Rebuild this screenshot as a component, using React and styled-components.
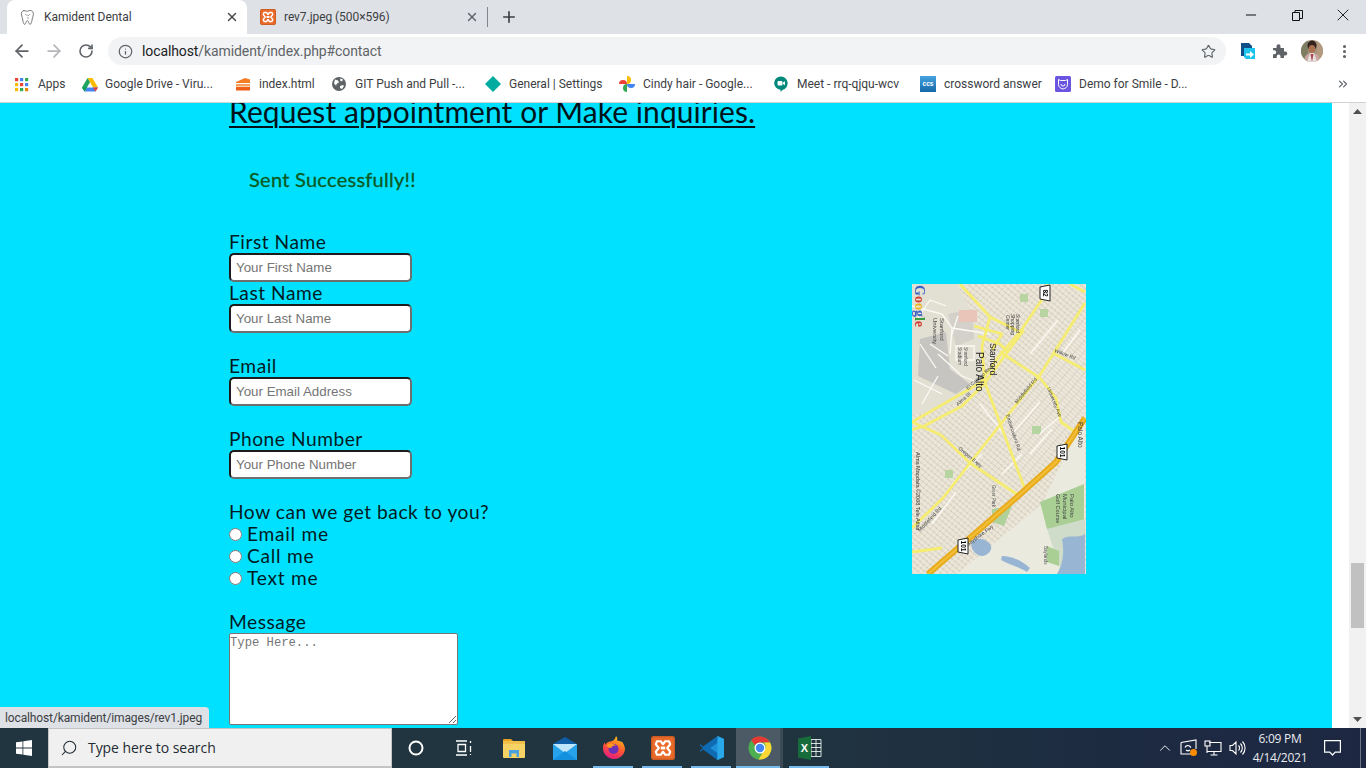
import React from "react";
import styled, { createGlobalStyle } from "styled-components";
import { ArrowLeft, ArrowRight, RotateCw, Info, Star, X, Plus, Minus, EllipsisVertical, ChevronsRight, ChevronUp, Search } from "lucide-react";

const Global = createGlobalStyle`
  html, body { margin: 0; height: 100%; overflow: hidden; background: #fff; }
  #root { height: 100vh; }
  * { box-sizing: border-box; }
`;

const Screen = styled.div`
  position: relative;
  height: 768px;
  width: 1366px;
  display: flex;
  flex-direction: column;
  overflow: hidden;
  font-family: Roboto, "Open Sans", sans-serif;
`;

/* ---------- browser chrome ---------- */
const TabStrip = styled.div`
  height: 34px;
  flex: none;
  background: #dee1e6;
  display: flex;
  align-items: stretch;
  padding-left: 7px;
`;
const Tab = styled.div`
  width: 240px;
  display: flex;
  align-items: center;
  padding: 0 8px 0 13px;
  gap: 8px;
  border-radius: 8px 8px 0 0;
  background: ${p => (p.$active ? "#fff" : "transparent")};
  color: #3c4043;
  font-size: 12px;
  letter-spacing: -0.06px;
`;
const TabTitle = styled.span`
  flex: 1;
  white-space: nowrap;
`;
const TabDivider = styled.div`
  width: 1px;
  height: 20px;
  background: #80868b;
  align-self: center;
`;
const NewTab = styled.div`
  width: 44px;
  padding-right: 2px;
  display: flex;
  align-items: center;
  justify-content: center;
  color: #3c4043;
`;
const WindowControls = styled.div`
  margin-left: auto;
  display: flex;
  color: #111;
`;
const WindowButton = styled.div`
  width: 46px;
  height: 30px;
  display: flex;
  align-items: center;
  justify-content: center;
`;
const Toolbar = styled.div`
  height: 34px;
  flex: none;
  background: #fff;
  display: flex;
  align-items: center;
  padding: 0 0 0 6px;
`;
const NavButton = styled.div`
  width: 32px;
  height: 28px;
  display: flex;
  align-items: center;
  justify-content: center;
  color: ${p => (p.$off ? "#b4b6b9" : "#5f6368")};
`;
const Omnibox = styled.div`
  margin-left: 6px;
  width: 1118px;
  height: 28px;
  border-radius: 14px;
  background: #f1f3f4;
  display: flex;
  align-items: center;
  padding: 0 10px;
  color: #5f6368;
`;
const Url = styled.div`
  margin-left: 9px;
  flex: 1;
  font-size: 14px;
  letter-spacing: -0.1px;
  color: #5f6368;
  b { font-weight: 400; color: #202124; }
`;
const ToolbarIcons = styled.div`
  display: flex;
  align-items: center;
  padding-left: 6px;
`;
const ToolIcon = styled.div`
  width: 32px;
  height: 28px;
  display: flex;
  align-items: center;
  justify-content: center;
  color: #5f6368;
`;
const Bookmarks = styled.div`
  height: 35px;
  flex: none;
  background: #fff;
  border-bottom: 1px solid #d0d2d6;
  display: flex;
  align-items: center;
  padding: 0 0 2px 14px;
`;
const Bookmark = styled.div`
  width: ${p => p.$w}px;
  flex: none;
  display: flex;
  align-items: center;
  gap: ${p => p.$gap || 8}px;
  font-size: 12px;
  color: #3c4043;
  white-space: nowrap;
`;
const MoreBookmarks = styled.div`
  margin-left: auto;
  width: 46px;
  display: flex;
  justify-content: center;
  color: #5f6368;
`;

/* ---------- page ---------- */
const Viewport = styled.div`
  flex: 1;
  min-height: 0;
  display: flex;
  overflow: hidden;
`;
const Page = styled.main`
  width: 1332px;
  flex: none;
  background: #00e1ff;
  overflow: hidden;
`;
const Scrolled = styled.div`
  margin-top: -10px;
  padding-left: 229px;
  display: flex;
  align-items: flex-start;
  color: #001a24;
  font-family: Lato, "Open Sans", sans-serif;
  font-size: 19.2px;
  line-height: 22px;
`;
const FormColumn = styled.div`
  flex: 0 0 683px;
`;
const Heading = styled.h2`
  margin: 0;
  font-size: 30px;
  line-height: 36px;
  font-weight: 400;
  text-decoration: underline;
  text-decoration-thickness: 2px;
  text-underline-offset: 3px;
  letter-spacing: 0.06px;
  color: #00121a;
`;
const Alert = styled.div`
  padding: 39px 20px 41px;
  font-size: 20px;
  line-height: 22px;
  color: #0b5a22;
  letter-spacing: 0.27px;
  -webkit-text-stroke: 0.3px #0b5a22;
`;
const Form = styled.form`
  display: flex;
  flex-direction: column;
  align-items: flex-start;
`;
const Label = styled.label`
  display: block;
  height: 22px;
  letter-spacing: 0.52px;
  font-weight: 400;
`;
const TextInput = styled.input`
  display: block;
  width: 183px;
  height: 29px;
  padding: 0 5px;
  border: 2px solid #6f6f6f;
  border-top-color: #1d1d1d;
  border-left-color: #1d1d1d;
  border-radius: 5px;
  background: #fff;
  font-family: "Liberation Sans", Arial, sans-serif;
  font-size: 13.33px;
  margin-bottom: ${p => (p.$tight ? 0 : 22)}px;
  &::placeholder { color: #757575; opacity: 1; }
`;
const RadioRow = styled.label`
  display: flex;
  align-items: center;
  height: 22px;
  gap: 5px;
  letter-spacing: 0.72px;
`;
const Radio = styled.input`
  width: 13px;
  height: 13px;
  margin: 0;
  flex: none;
`;
const Spacer = styled.div`
  height: 22px;
`;
const TextArea = styled.textarea`
  display: block;
  width: 229px;
  height: 92px;
  padding: 2px 0;
  border: 1px solid #767676;
  border-radius: 2px;
  background: #fff;
  font-family: "Liberation Mono", monospace;
  font-size: 12.2px;
  line-height: 15px;
  &::placeholder { color: #757575; opacity: 1; }
`;
const MapColumn = styled.div`
  padding-top: 191px;
  flex: none;
`;
const MapFrame = styled.div`
  width: 174px;
  height: 290px;
  filter: blur(0.35px);
  svg { display: block; }
`;
const StatusBubble = styled.div`
  position: absolute;
  left: 0;
  bottom: 40px;
  width: 209px;
  height: 21px;
  background: #dee1e6;
  border-radius: 0 4px 0 0;
  padding-left: 5px;
  font-size: 12px;
  line-height: 22px;
  letter-spacing: -0.13px;
  color: #3c4043;
`;
const Gutter = styled.div`
  width: 17px;
  flex: none;
  background: #fff;
`;
const Scrollbar = styled.div`
  width: 17px;
  flex: none;
  background: #f1f1f1;
  padding: 0 2px;
  display: flex;
  flex-direction: column;
`;
const ScrollArrow = styled.div`
  height: 17px;
  flex: none;
  display: flex;
  align-items: center;
  justify-content: center;
`;
const ScrollTrack = styled.div`
  flex: 1;
  padding-top: 443px;
`;
const ScrollThumb = styled.div`
  height: 65px;
  background: #c1c1c1;
`;

/* ---------- taskbar ---------- */
const Taskbar = styled.footer`
  height: 40px;
  flex: none;
  display: flex;
  align-items: stretch;
  background: linear-gradient(90deg, #20353f 0%, #20353f 55%, #1d2a42 85%, #1d2741 100%);
  color: #fff;
`;
const StartButton = styled.div`
  width: 48px;
  display: flex;
  align-items: center;
  justify-content: center;
`;
const SearchBox = styled.div`
  width: 344px;
  background: #f0f0f0;
  border: 1px solid #c4c4c4;
  border-bottom-width: 2px;
  display: flex;
  align-items: center;
  padding-left: 11px;
  gap: 10px;
  color: #1e2b33;
  font-family: "Open Sans", Roboto, sans-serif;
  font-size: 14px;
  letter-spacing: -0.06px;
`;
const TaskIcons = styled.div`
  display: flex;
  align-items: stretch;
`;
const TaskIcon = styled.div`
  width: ${p => p.$w || 49}px;
  flex: none;
  display: flex;
  align-items: center;
  justify-content: center;
  position: relative;
  padding-left: ${p => (p.$current ? 4 : 0)}px;
  background: ${p => (p.$current ? "#4b5a65" : "transparent")};
  &::after {
    content: "";
    display: ${p => (p.$open ? "block" : "none")};
    position: absolute;
    left: ${p => (p.$current ? 0 : 4)}px;
    width: ${p => (p.$current ? 44 : 40)}px;
    bottom: 0;
    height: 2px;
    background: #76b9ed;
  }
`;
const TaskSeparator = styled.div`
  width: 3px;
  margin-right: 2px;
  flex: none;
  background: #3c4a56;
`;
const Tray = styled.div`
  margin-left: auto;
  display: flex;
  align-items: center;
`;
const TrayIcon = styled.div`
  width: 24px;
  display: flex;
  align-items: center;
  justify-content: center;
`;
const Clock = styled.div`
  width: 62px;
  padding-bottom: 1px;
  text-align: center;
  font-family: "Open Sans", Roboto, sans-serif;
  font-size: 12px;
  line-height: 19px;
  letter-spacing: -0.25px;
  color: #e9ebef;
`;
const Notify = styled.div`
  margin-left: 8px;
  margin-right: 5px;
  padding-right: 14px;
  border-right: 1px solid #6c7486;
  height: 40px;
  width: 42px;
  display: flex;
  align-items: center;
  justify-content: center;
`;

/* ---------- drawings ---------- */
const Tooth = () => (
  <svg width="16" height="17" viewBox="0 0 16 17" fill="none" stroke="#7d7d7d" strokeWidth="1">
    <path d="M4.5 1.5c-2.500 0-3.500 2-3 4.500.5 2 1 3 1.300 5 .3 2 .7 4 2 4.500 1.200-.5 1-3.500 2.500-4 1.500.5 1.300 3.500 2.700 4 1.300-.5 1.700-2.500 2-4.500.3-2 1-3 1.300-5 .4-2.500-.7-4.500-3.300-4.500-1.500 0-2 .8-3 .8s-2-.8-3.500-.8z" />
    <path d="M5 5l3 2 2-2M7 9h2" stroke="#a8a8a8" />
  </svg>
);
const Xampp = ({ size = 16 }) => (
  <svg width={size} height={size} viewBox="0 0 16 16">
    <rect width="16" height="16" rx="2" fill="#ea6a2a" />
    <rect x=".5" y=".5" width="15" height="15" rx="1.500" fill="none" stroke="#b9551f" strokeWidth=".6" />
    <path d="M4 3.500h2.500L8 5.500l1.500-2H12l.8 2-2 2.500 2 2.500-.8 2H9.500L8 10.500l-1.500 2H4l-.8-2 2-2.500-2-2.500z" fill="none" stroke="#fff" strokeWidth="1.400" strokeLinejoin="round" />
    <rect x="6.500" y="7" width="3" height="2" fill="#fff" />
  </svg>
);
const AppsGrid = () => {
  const c = ["#ea4335", "#4285f4", "#34a853", "#fbbc05", "#ea4335", "#4285f4", "#fbbc05", "#34a853", "#ea8600"];
  return (
    <svg width="15" height="15" viewBox="0 0 15 15">
      {c.map((f, i) => (
        <rect key={i} x={1 + (i % 3) * 5} y={1 + Math.floor(i / 3) * 5} width="3.200" height="3.200" fill={f} />
      ))}
    </svg>
  );
};
const Drive = () => (
  <svg width="16" height="15" viewBox="0 0 16 15">
    <path d="M5.500 1h5L16 10.500h-5z" fill="#fbbc04" />
    <path d="M5.500 1L0 10.500 2.500 14.500 8 5.300z" fill="#1fa463" />
    <path d="M5 10.500h11l-2.500 4h-11z" fill="#4285f4" />
    <path d="M5 10.500L2.500 14.500 0 10.500z" fill="#0f9d58" />
    <path d="M11 10.500h5l-2.500 4z" fill="#ea4335" />
  </svg>
);
const Cake = () => (
  <svg width="16" height="16" viewBox="0 0 16 16">
    <path d="M1 6l9-4 5 1.500V7H1z" fill="#f57c25" />
    <rect x="1" y="8" width="14" height="2.500" fill="#f8a25f" />
    <rect x="1" y="11" width="14" height="3.500" fill="#ee5f1a" />
  </svg>
);
const Globe = () => (
  <svg width="14" height="14" viewBox="0 0 14 14">
    <circle cx="7" cy="7" r="7" fill="#5f6368" />
    <path d="M3 2.500l3 1 1 2-2 1-1 2-2-2zM8 9l3-1 1 1-2 3-2-1zM8.500 1.500l2.500 1-1 2-2-1z" fill="#fff" />
  </svg>
);
const Diamond = () => (
  <svg width="16" height="16" viewBox="0 0 16 16">
    <path d="M8 0l8 8-8 8-8-8z" fill="#00ac9f" />
  </svg>
);
const Pinwheel = () => (
  <svg width="16" height="16" viewBox="0 0 16 16">
    <path d="M8 8V0a4 4 0 0 1 4 4 4 4 0 0 1-4 4z" fill="#fbbc04" />
    <path d="M8 8h8a4 4 0 0 1-4 4 4 4 0 0 1-4-4z" fill="#4285f4" />
    <path d="M8 8v8a4 4 0 0 1-4-4 4 4 0 0 1 4-4z" fill="#34a853" />
    <path d="M8 8H0a4 4 0 0 1 4-4 4 4 0 0 1 4 4z" fill="#ea4335" />
  </svg>
);
const Meet = () => (
  <svg width="16" height="16" viewBox="0 0 16 16">
    <path d="M8 0.500a6.800 6.800 0 0 1 1.500 13.400L7.500 16v-2.300A6.600 6.600 0 0 1 8 0.500z" fill="#00897b" />
    <rect x="4.500" y="5" width="5" height="4.500" rx="1" fill="#fff" />
    <path d="M10 6.500l2-1.300v4l-2-1.300z" fill="#fff" />
  </svg>
);
const Ccs = () => (
  <svg width="16" height="16" viewBox="0 0 16 16">
    <defs>
      <linearGradient id="ccsg" x1="0" y1="0" x2="0" y2="1">
        <stop offset="0" stopColor="#45a4e0" />
        <stop offset="1" stopColor="#1568a8" />
      </linearGradient>
    </defs>
    <rect width="16" height="16" fill="url(#ccsg)" />
    <text x="8" y="10" fontSize="6.500" fontWeight="700" fill="#fff" textAnchor="middle" fontFamily="Liberation Sans">ccs</text>
  </svg>
);
const Smile = () => (
  <svg width="16" height="16" viewBox="0 0 16 16">
    <rect width="16" height="16" rx="1.500" fill="#6a55e0" />
    <path d="M3.500 3.500l2 1h5l2-1v5c0 2.500-2 4-4.500 4.500-2.500-.5-4.500-2-4.500-4.500z" fill="none" stroke="#fff" strokeWidth="1" />
    <path d="M6 8a2 2 0 0 0 4 0" fill="none" stroke="#fff" strokeWidth="1" />
  </svg>
);
const Share = () => (
  <svg width="18" height="18" viewBox="0 0 18 18">
    <path d="M2 1h8l3 3v3H6v7H2z" fill="#0d4f86" />
    <path d="M5 6h11v11H7l-2-2z" fill="#1cc3ea" />
    <path d="M7 11.500h4V9l4 3.500-4 3.500v-2.500H7z" fill="#fff" />
  </svg>
);
const PuzzleSolid = () => (
  <svg width="16" height="16" viewBox="0 0 16 16">
    <path d="M1 5h3.500V3.200a2 2 0 0 1 4 0V5H12v3.500h1.300a2 2 0 0 1 0 4H12V15H8.500v-1.500a1.900 1.900 0 0 0-3.800 0V15H1v-3.700h1.200a2 2 0 0 0 0-4H1z" fill="#5f6368" />
  </svg>
);
const Avatar = () => (
  <svg width="22" height="22" viewBox="0 0 22 22">
    <defs>
      <clipPath id="avc"><circle cx="11" cy="11" r="11" /></clipPath>
    </defs>
    <g clipPath="url(#avc)">
      <rect width="22" height="22" fill="#a3917c" />
      <rect x="0" y="0" width="7" height="22" fill="#7f7d62" />
      <rect x="16" y="0" width="6" height="22" fill="#b39a7e" />
      <ellipse cx="11" cy="5.500" rx="4.500" ry="5" fill="#33231e" />
      <ellipse cx="11" cy="9" rx="3.300" ry="4" fill="#a9714f" />
      <path d="M3 22c0-6 3-9 8-9s8 3 8 9z" fill="#c9a8a2" />
      <path d="M6 22l3-9h4l3 9z" fill="#e8e2df" />
      <path d="M9.500 14l1.500 8 1.500-8z" fill="#a8434a" />
    </g>
  </svg>
);
const WinLogo = () => (
  <svg width="16" height="16" viewBox="0 0 16 16" fill="#fff">
    <path d="M0 2.300l6.500-.9v6.200H0zM7.300 1.300L16 0v7.600H7.300zM0 8.400h6.500v6.200L0 13.700zM7.300 8.400H16V16l-8.700-1.300z" />
  </svg>
);
const TaskView = () => (
  <svg width="18" height="16" viewBox="0 0 18 16" fill="none" stroke="#fff" strokeWidth="1.300">
    <path d="M1 1h11M1 15h11M3 4.500h7.500v7H3zM15.500 1v2M15.500 6v6M15.500 14v1" />
  </svg>
);
const Explorer = () => (
  <svg width="22" height="20" viewBox="0 0 22 20">
    <path d="M0 2a1 1 0 0 1 1-1h7l2 2h-10z" fill="#e9a21d" />
    <rect y="3" width="22" height="17" rx="1" fill="#f6d365" />
    <rect y="3" width="22" height="3" fill="#efc04a" />
    <path d="M6 12h10v7h-2.500v-3.500h-5V19H6z" fill="#4aa3df" />
  </svg>
);
const Mail = () => (
  <svg width="24" height="23" viewBox="0 0 24 23">
    <path d="M0 7L12 0l12 7v3H0z" fill="#0f5ea8" />
    <path d="M0 7h24v16H0z" fill="#26a3ea" />
    <path d="M0 7l12 9 12-9z" fill="#bfe6fb" />
    <path d="M0 23l12-9 12 9z" fill="#1490e0" />
  </svg>
);
const Firefox = () => (
  <svg width="24" height="24" viewBox="0 0 24 24">
    <defs>
      <linearGradient id="ffg" x1="0.700" y1="0" x2="0.300" y2="1">
        <stop offset="0" stopColor="#ffc61a" />
        <stop offset="0.500" stopColor="#ff5a30" />
        <stop offset="1" stopColor="#e31587" />
      </linearGradient>
    </defs>
    <path d="M23 13A11 11 0 1 1 1 11c.2-2 .8-3.500 1.800-4.500 0 1 .4 1.600.9 2 .8-1.700 2.500-2.800 4.300-3 1.500-.1 5-1 6-5.500 1.500 1.500 1.500 3 1 4.500 3 .5 5 1 6 2.500.7 1.500 2 3.500 2 6z" fill="url(#ffg)" />
    <circle cx="11.500" cy="13" r="5" fill="#6b2fb8" />
    <path d="M4.500 9c3-2.500 7.500-2 9.500 1-2-.5-4-.2-4.500 1.500-1.500 1-4 0-5-2.500z" fill="#ff9a1f" />
  </svg>
);
const VsCode = () => (
  <svg width="24" height="24" viewBox="0 0 24 24">
    <path d="M17.500 0L24 3v18l-6.500 3L7 13.500l10.500-10z" fill="#1e8fd8" />
    <path d="M17.500 0v7L10 12l7.500 5v7L3 13.500 0 16l-.3-1.500L3 12 0 9.500 0 8l3 2.500z" fill="#0f6cb4" />
    <path d="M17.500 0L24 3v18l-6.500 3z" fill="#29a9ea" />
  </svg>
);
const Chrome = () => (
  <svg width="24" height="24" viewBox="0 0 24 24">
    <circle cx="12" cy="12" r="11.500" fill="#4caf50" />
    <path d="M12 .5A11.500 11.500 0 0 1 22 6.500H12a5.500 5.500 0 0 0-5 3L3 3.800A11.500 11.500 0 0 1 12 .5z" fill="#e53935" />
    <path d="M22 6.500A11.500 11.500 0 0 1 10.500 23.400L15.800 15a5.500 5.500 0 0 0 0-8.500z" fill="#fdd835" />
    <circle cx="12" cy="12" r="5.500" fill="#fff" />
    <circle cx="12" cy="12" r="4.200" fill="#4285f4" />
  </svg>
);
const Excel = () => (
  <svg width="24" height="24" viewBox="0 0 24 24">
    <path d="M13 3.500h10v17H13zM13 7.500h10M13 11.500h10M13 15.500h10M18 3.500v17" fill="none" stroke="#e8f2ec" strokeWidth=".9" />
    <path d="M0 2.500L13 0v24L0 21.500z" fill="#166c3b" />
    <text x="6.500" y="16" textAnchor="middle" fill="#fff" fontSize="11" fontWeight="700" fontFamily="Liberation Sans">X</text>
  </svg>
);
const SyncTray = () => (
  <svg width="18" height="18" viewBox="0 0 18 18" fill="none" stroke="#fff" strokeWidth="1.100">
    <path d="M1 3.500L16 1v3M1 3.500V15h10M16 4v6" />
    <path d="M5 8.500a3 3 0 0 1 5-1l1 1M10 11a3 3 0 0 1-4 0" />
    <circle cx="13.500" cy="13.500" r="3.500" fill="#ff8c00" stroke="none" />
  </svg>
);
const NetworkTray = () => (
  <svg width="18" height="16" viewBox="0 0 18 16" fill="none" stroke="#fff" strokeWidth="1.100">
    <path d="M5 2.500h12v9H3M10 11.500V15M6.500 15h7" />
    <rect x="1" y="1" width="5" height="5" />
    <path d="M3 6v7" />
  </svg>
);
const SoundTray = () => (
  <svg width="17" height="16" viewBox="0 0 17 16" fill="none" stroke="#fff" strokeWidth="1.100">
    <path d="M1 5.500h2.500L7 2v12l-3.500-3.500H1zM9.500 5.500a3.500 3.500 0 0 1 0 5M11.500 3.500a6.500 6.500 0 0 1 0 9M13.500 1.500a9.500 9.500 0 0 1 0 13" />
  </svg>
);
const Bubble = () => (
  <svg width="17" height="16" viewBox="0 0 17 16" fill="none" stroke="#fff" strokeWidth="1.200">
    <path d="M.6.6h15.800v11.500h-5.200L8.500 15l-2.700-2.900H.6z" />
  </svg>
);

const thinRoads = [
  "M48 0L78 33", "M78 33L88 38L108 48", "M78 33L70 62L73 99", "M88 68L128 94L144 114L149 138L163 148",
  "M141 69L173 86", "M158 0L173 8", "M0 138L29 151", "M29 151L58 179L106 211",
  "M73 99L88 139L114 208", "M0 244L31 214L58 179L88 141L128 91L173 19",
  "M0 138L68 99L88 71L108 48L131 14L136 0", "M12 142L50 122L72 100L100 62L112 46",
  "M96 68L88 60L66 52", "M0 268L30 264", "M62 42L90 50L80 66", "M0 146L12 142"
];
const whiteRoads = [
  "M0 22L30 30L40 44L38 70", "M40 44L78 50", "M26 70L50 92L70 100", "M8 60L24 84", "M44 62L62 62L62 76L44 76z",
  "M10 120L26 92", "M46 32L40 50", "M52 66V76", "M6 34L18 16L34 22", "M2 96L30 110", "M18 60L36 72", "M128 150L148 132", "M100 150L128 118", "M68 120L92 150",
  "M40 200L70 170", "M20 240L44 208", "M118 70L146 36", "M150 70L168 46", "M118 170L140 145", "M90 190L110 170"
];
const labels = [
  [64, 68, "Palo Alto", 10, "#222", 90], [78, 59, "Stanford", 8.500, "#222", 90], [28, 34, "Stanford", 6, "#444", 90],
  [21, 34, "University", 6, "#444", 90], [52, 63, "Stanford", 5, "#555", 90], [46, 63, "Stadium", 5, "#555", 90],
  [104, 30, "Stanford", 5, "#444", 90], [99, 30, "Shopping", 5, "#444", 90], [94, 31, "Center", 5, "#444", 90],
  [142, 68, "Willow Rd", 5, "#444", 20], [135, 104, "University Ave", 5, "#444", 68], [166, 138, "Palo Alto", 6.500, "#444", 90],
  [56, 106, "El Camino Real", 5, "#444", -42], [46, 122, "Alma St", 5, "#444", -42], [105, 120, "Middlefield Rd", 5, "#444", -50],
  [94, 131, "Embarcadero Rd", 5, "#444", 72], [80, 201, "Greer Park", 4.500, "#555", 90], [46, 165, "Oregon Expy", 5, "#444", 40],
  [158, 210, "Palo Alto", 6, "#444", 90], [151, 210, "Municipal", 6, "#444", 90], [144, 210, "Golf Course", 5.500, "#444", 90],
  [132, 262, "Baylands", 4.500, "#555", 90], [4, 168, "Alma Mapdata ©2008 Tele Atlas", 5.500, "#333", 90],
  [56, 262, "Bayshore Fwy", 5, "#333", -36], [8, 248, "Middlefield Rd", 5, "#444", -47]
];
const MapPic = () => (
  <svg width="174" height="290" viewBox="0 0 174 290">
    <defs>
      <pattern id="blocks" width="4.500" height="4.500" patternUnits="userSpaceOnUse" patternTransform="rotate(40)">
        <rect width="4.500" height="4.500" fill="#ebe6d8" />
        <path d="M0 0H4.500M0 0V1.500M0 3V4.500" stroke="#bfb8a8" strokeWidth=".8" />
      </pattern>
      <pattern id="blocks2" width="3.500" height="7" patternUnits="userSpaceOnUse" patternTransform="rotate(-50)">
        <rect width="3.500" height="7" fill="#ece7da" />
        <path d="M0 0H3.500M0 0V7" stroke="#c6bfaf" strokeWidth=".8" />
      </pattern>
    </defs>
    <rect width="174" height="290" fill="url(#blocks)" />
    <path d="M90 140L173 30V130L110 200z" fill="url(#blocks2)" />
    <path d="M0 0H45L70 50L70 105L30 125L0 130z" fill="#e2dfd3" />
    <path d="M8 55L34 48L38 85L58 100L44 110L6 92z" fill="#c6c5c1" />
    <path d="M36 30L60 25L62 55L44 62z" fill="#d3d1ca" />
    <rect x="47" y="26" width="18" height="12" fill="#e9c4b8" />
    <rect x="108" y="10" width="8" height="8" fill="#b8d4a0" />
    <rect x="128" y="25" width="8" height="8" fill="#b8d4a0" />
    <rect x="120" y="142" width="9" height="8" fill="#b5d5a0" />
    <rect x="33" y="186" width="8" height="8" fill="#b5d5a0" />
    <path d="M173 130V290H45L130 220z" fill="#ebeadf" />
    <path d="M128 218L172 200V240L135 245z" fill="#a9cf94" />
    <path d="M135 245L173 235V290H150z" fill="#cfdcc9" />
    <path d="M150 255c8-5 15 0 23-5v40h-28c5-8 8-20 5-35z" fill="#98b6d4" />
    <path d="M60 258c6-6 14-3 18 2s-2 12-8 12-13-8-10-14zM90 272c5 0 18 2 28 12l-3 4c-10-6-20-8-26-12z" fill="#98b6d4" />
    <path d="M135 262l12 5v15l-12-4z" fill="#a9cf94" />
    <path d="M80 225L100 222L92 242L80 238z" fill="#b0d29a" />
    {whiteRoads.map(d => <path key={d} d={d} fill="none" stroke="#fbfaf4" strokeWidth="1.300" />)}
    {thinRoads.map(d => (
      <path key={d} d={d} fill="none" stroke="#f5ec70" strokeWidth="2.800" strokeLinejoin="round" />
    ))}
    <path d="M16 290L38 271L104 214L144 178L173 134" fill="none" stroke="#e8ab1c" strokeWidth="6" />
    <path d="M16 290L38 271L104 214L144 178L173 134" fill="none" stroke="#f2bf3a" strokeWidth="2" />
    {labels.map(([x, y, t, s, c, r]) => (
      <text key={t + x} x={x} y={y} fontSize={s} fill={c} fontFamily="Liberation Sans, sans-serif" transform={`rotate(${r} ${x} ${y})`}>{t}</text>
    ))}
    {[[133, 9, "82"], [150, 168, "101"], [51, 262, "101"]].map(([x, y, t]) => (
      <g key={x} transform={`translate(${x} ${y}) rotate(90)`}>
        <path d="M-8-5H8L6 5H-6z" fill="#fff" stroke="#222" />
        <text y="2.500" textAnchor="middle" fontSize="6.500" fontWeight="700" fontFamily="Liberation Sans">{t}</text>
      </g>
    ))}
    <g transform="rotate(90 3 1)" fontFamily="Liberation Serif" fontWeight="700" fontSize="14">
      <text x="3" y="1" fill="#3b63c4">G<tspan fill="#d23f31">o</tspan><tspan fill="#e8b423">o</tspan><tspan fill="#3b63c4">g</tspan><tspan fill="#3a9d45">l</tspan><tspan fill="#d23f31">e</tspan></text>
    </g>
  </svg>
);

const bookmarks = [
  [68, <AppsGrid />, "Apps", 9], [153, <Drive />, "Google Drive - Viru...", 7], [97, <Cake />, "index.html"],
  [153, <Globe />, "GIT Push and Pull -...", 9], [134, <Diamond />, "General | Settings"], [154, <Pinwheel />, "Cindy hair - Google..."],
  [147, <Meet />, "Meet - rrq-qjqu-wcv"], [135, <Ccs />, "crossword answer"], [150, <Smile />, "Demo for Smile - D..."]
];

export default function App() {
  return (
    <Screen>
      <Global />
      <TabStrip>
        <Tab $active>
          <Tooth />
          <TabTitle>Kamident Dental</TabTitle>
          <X size={14} strokeWidth={2.4} color="#45494d" />
        </Tab>
        <Tab>
          <Xampp />
          <TabTitle>rev7.jpeg (500×596)</TabTitle>
          <X size={14} strokeWidth={2.4} color="#5f6368" />
        </Tab>
        <TabDivider />
        <NewTab><Plus size={18} strokeWidth={2.2} /></NewTab>
        <WindowControls>
          <WindowButton><Minus size={16} strokeWidth={1.5} /></WindowButton>
          <WindowButton>
            <svg width="11" height="11" viewBox="0 0 11 11" fill="none" stroke="#111"><path d="M.5 2.500h7v8h-7zM3 2.500V.5h7.500v8H7.500" /></svg>
          </WindowButton>
          <WindowButton><X size={20} strokeWidth={1.1} /></WindowButton>
        </WindowControls>
      </TabStrip>
      <Toolbar>
        <NavButton><ArrowLeft size={20} strokeWidth={2.1} /></NavButton>
        <NavButton $off><ArrowRight size={20} strokeWidth={2.1} /></NavButton>
        <NavButton><RotateCw size={16} strokeWidth={2.4} /></NavButton>
        <Omnibox>
          <Info size={15} strokeWidth={2} />
          <Url><b>localhost</b>/kamident/index.php#contact</Url>
          <Star size={15} strokeWidth={1.8} />
        </Omnibox>
        <ToolbarIcons>
          <ToolIcon><Share /></ToolIcon>
          <ToolIcon><PuzzleSolid /></ToolIcon>
          <ToolIcon><Avatar /></ToolIcon>
          <ToolIcon><EllipsisVertical size={17} strokeWidth={2.4} /></ToolIcon>
        </ToolbarIcons>
      </Toolbar>
      <Bookmarks>
        {bookmarks.map(([w, icon, t, g]) => (
          <Bookmark key={t} $w={w} $gap={g}>{icon}<span>{t}</span></Bookmark>
        ))}
        <MoreBookmarks><ChevronsRight size={14} strokeWidth={2} /></MoreBookmarks>
      </Bookmarks>
      <Viewport>
        <Page>
          <Scrolled>
            <FormColumn>
              <Heading>Request appointment or Make inquiries.</Heading>
              <Alert>Sent Successfully!!</Alert>
              <Form onSubmit={e => e.preventDefault()}>
                <Label>First Name</Label>
                <TextInput $tight placeholder="Your First Name" />
                <Label>Last Name</Label>
                <TextInput placeholder="Your Last Name" />
                <Label>Email</Label>
                <TextInput placeholder="Your Email Address" />
                <Label>Phone Number</Label>
                <TextInput placeholder="Your Phone Number" />
                <Label>How can we get back to you?</Label>
                <RadioRow><Radio type="radio" name="back" />Email me</RadioRow>
                <RadioRow><Radio type="radio" name="back" />Call me</RadioRow>
                <RadioRow><Radio type="radio" name="back" />Text me</RadioRow>
                <Spacer />
                <Label>Message</Label>
                <TextArea placeholder="Type Here..." />
              </Form>
            </FormColumn>
            <MapColumn><MapFrame><MapPic /></MapFrame></MapColumn>
          </Scrolled>
        </Page>
        <Gutter />
        <Scrollbar>
          <ScrollArrow>
            <svg width="9" height="5" viewBox="0 0 9 5"><path d="M4.500 0L9 5H0z" fill="#505050" /></svg>
          </ScrollArrow>
          <ScrollTrack><ScrollThumb /></ScrollTrack>
          <ScrollArrow>
            <svg width="9" height="5" viewBox="0 0 9 5"><path d="M4.500 5L9 0H0z" fill="#505050" /></svg>
          </ScrollArrow>
        </Scrollbar>
      </Viewport>
      <StatusBubble>localhost/kamident/images/rev1.jpeg</StatusBubble>
      <Taskbar>
        <StartButton><WinLogo /></StartButton>
        <SearchBox>
          <Search size={18} strokeWidth={1.4} style={{ transform: "scaleX(-1)" }} />
          <span>Type here to search</span>
        </SearchBox>
        <TaskIcons>
          <TaskIcon $w={48}>
            <svg width="16" height="16" viewBox="0 0 16 16" fill="none" stroke="#fff" strokeWidth="2"><circle cx="8" cy="8" r="6.500" /></svg>
          </TaskIcon>
          <TaskIcon $w={48}><TaskView /></TaskIcon>
          <TaskIcon $w={52}><Explorer /></TaskIcon>
          <TaskIcon><Mail /></TaskIcon>
          <TaskIcon $open><Firefox /></TaskIcon>
          <TaskIcon $open><Xampp size={24} /></TaskIcon>
          <TaskIcon $open><VsCode /></TaskIcon>
          <TaskIcon $w={44} $open $current><Chrome /></TaskIcon>
          <TaskSeparator />
          <TaskIcon $open><Excel /></TaskIcon>
        </TaskIcons>
        <Tray>
          <TrayIcon><ChevronUp size={18} strokeWidth={1.2} /></TrayIcon>
          <TrayIcon><SyncTray /></TrayIcon>
          <TrayIcon><NetworkTray /></TrayIcon>
          <TrayIcon><SoundTray /></TrayIcon>
          <Clock>6:09 PM<br />4/14/2021</Clock>
          <Notify><Bubble /></Notify>
        </Tray>
      </Taskbar>
    </Screen>
  );
}
